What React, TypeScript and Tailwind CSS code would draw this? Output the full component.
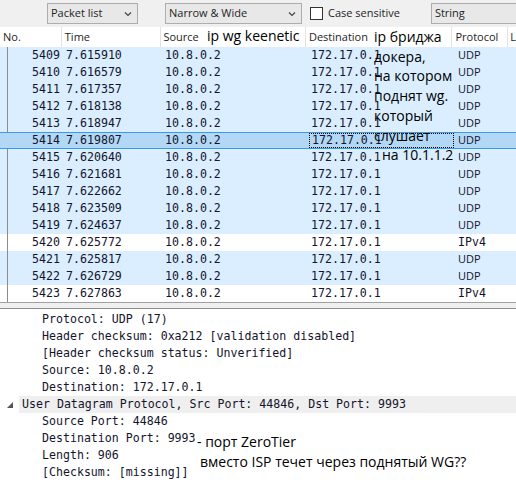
import React from 'react';

type Row = { no: number; time: string; proto: 'UDP' | 'IPv4'; selected?: boolean };

const rows: Row[] = [
  { no: 5409, time: '7.615910', proto: 'UDP' },
  { no: 5410, time: '7.616579', proto: 'UDP' },
  { no: 5411, time: '7.617357', proto: 'UDP' },
  { no: 5412, time: '7.618138', proto: 'UDP' },
  { no: 5413, time: '7.618947', proto: 'UDP' },
  { no: 5414, time: '7.619807', proto: 'UDP', selected: true },
  { no: 5415, time: '7.620640', proto: 'UDP' },
  { no: 5416, time: '7.621681', proto: 'UDP' },
  { no: 5417, time: '7.622662', proto: 'UDP' },
  { no: 5418, time: '7.623509', proto: 'UDP' },
  { no: 5419, time: '7.624637', proto: 'UDP' },
  { no: 5420, time: '7.625772', proto: 'IPv4' },
  { no: 5421, time: '7.625817', proto: 'UDP' },
  { no: 5422, time: '7.626729', proto: 'UDP' },
  { no: 5423, time: '7.627863', proto: 'IPv4' },
];

const mono = "font-['DejaVu_Sans_Mono',monospace] text-[11.6px] text-[#14142c]";
const ui = "font-['Open_Sans',sans-serif] text-[11px] text-[#1e1e1e]";
const note = "font-['Open_Sans',sans-serif] text-[14px] text-black z-20";

function Chevron() {
  return (
    <svg width="8" height="6" viewBox="0 0 8 6" className="shrink-0">
      <path d="M1 1.5 L4 4.5 L7 1.5" fill="none" stroke="#444" strokeWidth="1.2" />
    </svg>
  );
}

function Toolbar() {
  return (
    <div className={`h-[27px] bg-[#f0f0f0] flex items-center pl-[47px] ${ui}`}>
      <div className="w-[91px] h-[21px] border border-[#adadad] bg-[#e8e8e8] flex items-center justify-between pl-[3px] pr-[5px]">
        <span>Packet list</span>
        <Chevron />
      </div>
      <div className="ml-[27px] w-[137px] h-[21px] border border-[#adadad] bg-[#e8e8e8] flex items-center justify-between pl-[3px] pr-[5px]">
        <span>Narrow &amp; Wide</span>
        <Chevron />
      </div>
      <div className="ml-[8px] w-[13px] h-[13px] border border-[#333] bg-white" />
      <span className="ml-[5px]">Case sensitive</span>
      <div className="ml-[31px] flex-1 h-[21px] border border-[#adadad] border-r-0 bg-[#e8e8e8] flex items-center pl-[3px]">
        <span>String</span>
      </div>
    </div>
  );
}

function Header() {
  return (
    <div className={`h-[20px] bg-white flex items-center ${ui}`}>
      <div className="w-[62px] pl-[3px] border-r border-[#e3e3e3] h-full flex items-center">No.</div>
      <div className="w-[100px] pl-[3px] border-r border-[#e3e3e3] h-full flex items-center">Time</div>
      <div className="w-[145px] pl-[2px] border-r border-[#e3e3e3] h-full flex items-center">Source</div>
      <div className="w-[147px] pl-[3px] border-r border-[#e3e3e3] h-full flex items-center">Destination</div>
      <div className="w-[56px] pl-[3px] border-r border-[#e3e3e3] h-full flex items-center">Protocol</div>
      <div className="pl-[2px] h-full flex items-center">L</div>
    </div>
  );
}

function PacketRow({ r }: { r: Row }) {
  const bg = r.selected
    ? 'bg-[#b3d8f5] border-y border-[#3a9be0] relative z-10'
    : r.proto === 'UDP'
      ? 'bg-[#daeeff]'
      : 'bg-white';
  return (
    <div className={`h-[17px] flex items-center ${bg} ${mono}`}>
      <div className="w-[62px] pr-[2px] text-right">{r.no}</div>
      <div className="w-[100px] pl-[4px]">{r.time}</div>
      <div className="w-[145px] pl-[3px]">10.8.0.2</div>
      <div className="w-[147px] h-full flex items-center pl-[2px]">
        <span
          className={`h-[15px] w-[145px] flex items-center pl-[2px] ${r.selected ? 'border border-dotted border-black' : ''}`}
        >
          172.17.0.1
        </span>
      </div>
      <div className={`w-[56px] pl-[4px] ${r.proto === 'UDP' ? "font-['Open_Sans',sans-serif] text-[11px]" : ''}`}>
        {r.proto}
      </div>
    </div>
  );
}

function Detail() {
  const top = [
    'Protocol: UDP (17)',
    'Header checksum: 0xa212 [validation disabled]',
    '[Header checksum status: Unverified]',
    'Source: 10.8.0.2',
    'Destination: 172.17.0.1',
  ];
  const udp = ['Source Port: 44846', 'Destination Port: 9993', 'Length: 906', '[Checksum: [missing]]'];
  return (
    <div className={`bg-white pt-[2px] ${mono}`}>
      {top.map((t) => (
        <div key={t} className="h-[17px] flex items-center pl-[42px] whitespace-pre">
          {t}
        </div>
      ))}
      <div className="h-[17px] flex items-center">
        <div className="w-[19px] flex items-center justify-center pl-[1px]">
          <svg width="6" height="6" viewBox="0 0 6 6">
            <polygon points="6,0 6,6 0,6" fill="#555" />
          </svg>
        </div>
        <div className="flex-1 h-full bg-[#efefef] flex items-center pl-[3px] whitespace-pre">
          User Datagram Protocol, Src Port: 44846, Dst Port: 9993
        </div>
      </div>
      {udp.map((t) => (
        <div key={t} className="h-[17px] flex items-center pl-[42px] whitespace-pre">
          {t}
        </div>
      ))}
    </div>
  );
}

export default function App() {
  return (
    <div className="w-[516px] h-[484px] bg-white overflow-hidden relative">
      <Toolbar />
      <Header />
      <div className="relative">
        <div className="absolute left-[7px] top-0 bottom-0 w-px bg-[#8c8c8c]" />
        {rows.map((r) => (
          <PacketRow key={r.no} r={r} />
        ))}
      </div>
      <div className="h-[7px] bg-[#f0f0f0] border-t border-[#a0a0a0] border-b border-b-[#8c8c8c]" />
      <Detail />

      <div className={`absolute left-[207px] top-[26px] leading-[20px] ${note}`}>ip wg keenetic</div>
      <div className={`absolute left-[374px] top-[27px] leading-[19.7px] ${note}`}>
        <div>ip бриджа</div>
        <div>докера,</div>
        <div>на котором</div>
        <div>поднят wg.</div>
        <div>который</div>
        <div>слушает</div>
        <div className="pl-[8px]">на 10.1.1.2</div>
      </div>
      <div className={`absolute left-[197px] top-[432px] leading-[20px] ${note}`}>- порт ZeroTier</div>
      <div className={`absolute left-[200px] top-[452px] leading-[20px] ${note}`}>
        вместо ISP течет через поднятый WG??
      </div>
    </div>
  );
}
